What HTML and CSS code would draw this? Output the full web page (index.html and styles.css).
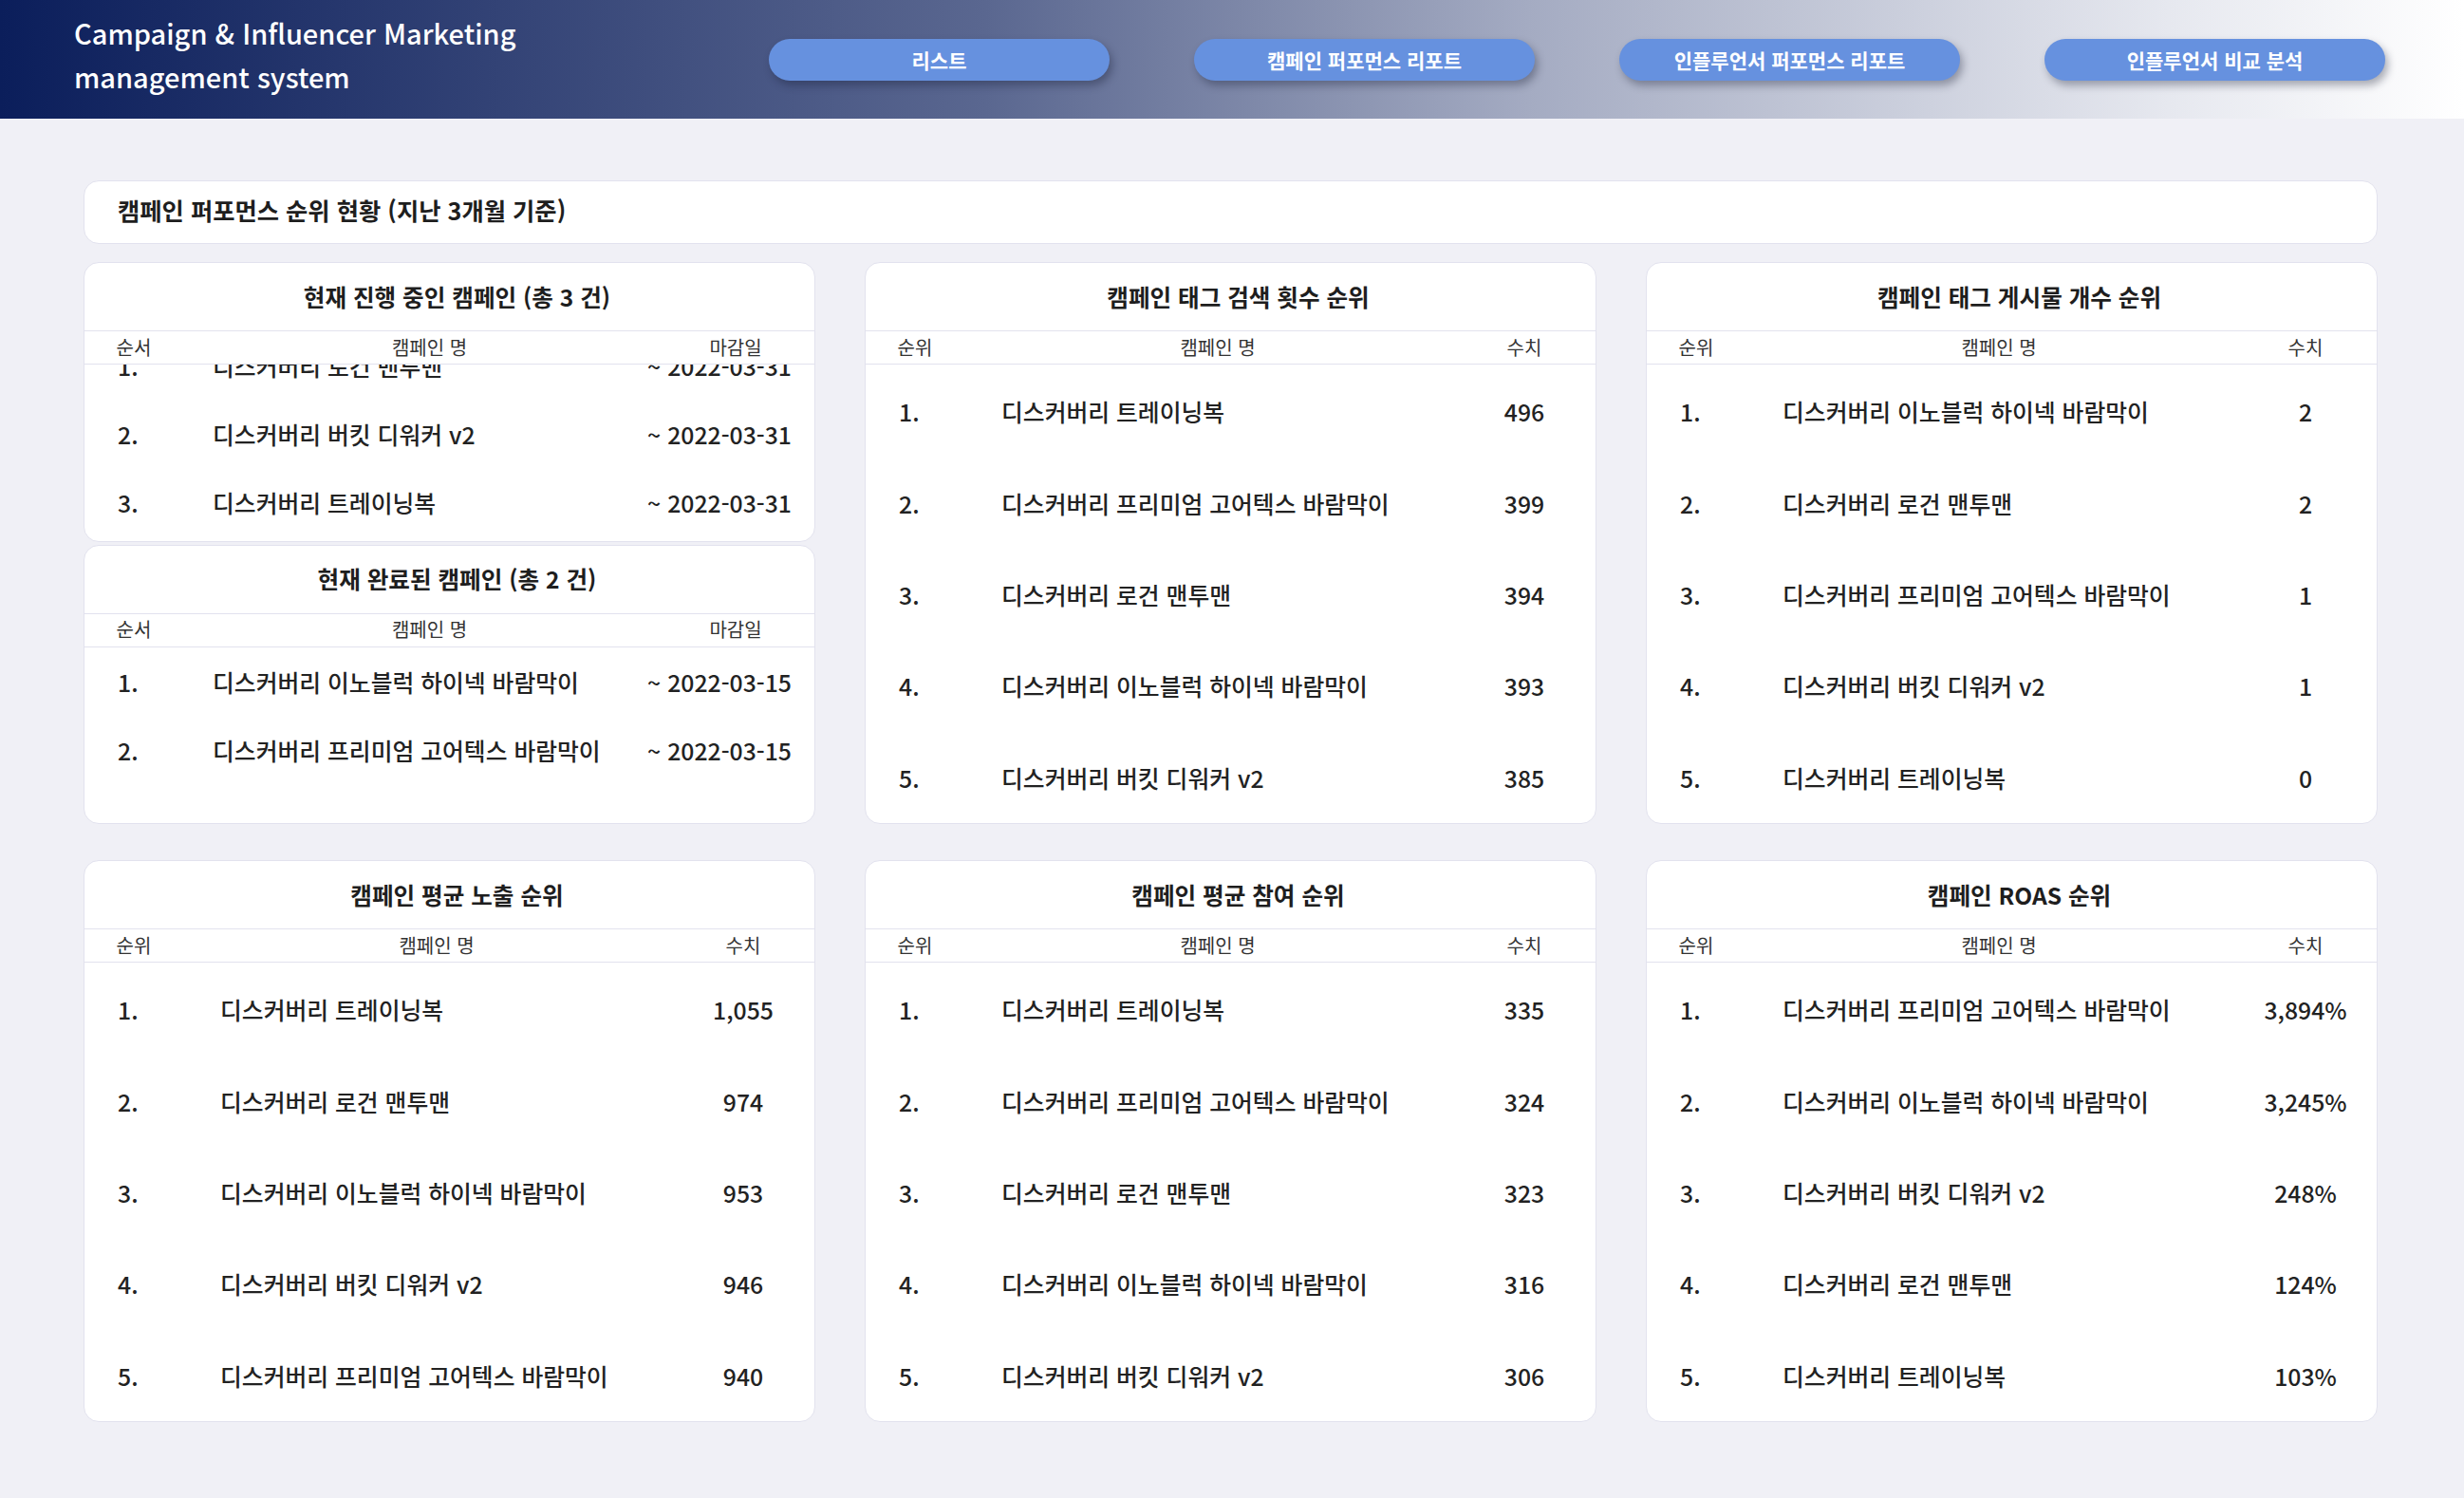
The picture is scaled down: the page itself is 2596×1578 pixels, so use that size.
FILE: index.html
```html
<!DOCTYPE html>
<html lang="ko">
<head>
<meta charset="utf-8">
<title>Campaign &amp; Influencer Marketing management system</title>
<link rel="stylesheet" href="styles.css">
</head>
<body>
<header class="topbar">
  <div class="brand">Campaign &amp; Influencer Marketing<br>management system</div>
  <nav class="nav">
    <a class="nav-btn">리스트</a>
    <a class="nav-btn">캠페인 퍼포먼스 리포트</a>
    <a class="nav-btn">인플루언서 퍼포먼스 리포트</a>
    <a class="nav-btn">인플루언서 비교 분석</a>
  </nav>
</header>
<main class="page">
  <div class="banner">캠페인 퍼포먼스 순위 현황 (지난 3개월 기준)</div>
  <div class="grid">
    <div class="stack">
      <section class="card">
        <h2 class="card-title">현재 진행 중인 캠페인 (총 3 건)</h2>
        <div class="thead date-cols"><span>순서</span><span>캠페인 명</span><span>마감일</span></div>
        <div class="tbody scrolled">
          <div class="row date-cols short"><span class="rank">1.</span><span class="name">디스커버리 로건 맨투맨</span><span class="date">~ 2022-03-31</span></div>
          <div class="row date-cols short"><span class="rank">2.</span><span class="name">디스커버리 버킷 디워커 v2</span><span class="date">~ 2022-03-31</span></div>
          <div class="row date-cols short"><span class="rank">3.</span><span class="name">디스커버리 트레이닝복</span><span class="date">~ 2022-03-31</span></div>
        </div>
      </section>
      <section class="card">
        <h2 class="card-title">현재 완료된 캠페인 (총 2 건)</h2>
        <div class="thead date-cols"><span>순서</span><span>캠페인 명</span><span>마감일</span></div>
        <div class="tbody">
          <div class="row date-cols short"><span class="rank">1.</span><span class="name">디스커버리 이노블럭 하이넥 바람막이</span><span class="date">~ 2022-03-15</span></div>
          <div class="row date-cols short"><span class="rank">2.</span><span class="name">디스커버리 프리미엄 고어텍스 바람막이</span><span class="date">~ 2022-03-15</span></div>
        </div>
      </section>
    </div>

    <section class="card">
      <h2 class="card-title">캠페인 태그 검색 횟수 순위</h2>
      <div class="thead val-cols"><span>순위</span><span>캠페인 명</span><span>수치</span></div>
      <div class="tbody fill">
        <div class="row val-cols"><span class="rank">1.</span><span class="name">디스커버리 트레이닝복</span><span class="val">496</span></div>
        <div class="row val-cols"><span class="rank">2.</span><span class="name">디스커버리 프리미엄 고어텍스 바람막이</span><span class="val">399</span></div>
        <div class="row val-cols"><span class="rank">3.</span><span class="name">디스커버리 로건 맨투맨</span><span class="val">394</span></div>
        <div class="row val-cols"><span class="rank">4.</span><span class="name">디스커버리 이노블럭 하이넥 바람막이</span><span class="val">393</span></div>
        <div class="row val-cols"><span class="rank">5.</span><span class="name">디스커버리 버킷 디워커 v2</span><span class="val">385</span></div>
      </div>
    </section>

    <section class="card">
      <h2 class="card-title">캠페인 태그 게시물 개수 순위</h2>
      <div class="thead val-cols"><span>순위</span><span>캠페인 명</span><span>수치</span></div>
      <div class="tbody fill">
        <div class="row val-cols"><span class="rank">1.</span><span class="name">디스커버리 이노블럭 하이넥 바람막이</span><span class="val">2</span></div>
        <div class="row val-cols"><span class="rank">2.</span><span class="name">디스커버리 로건 맨투맨</span><span class="val">2</span></div>
        <div class="row val-cols"><span class="rank">3.</span><span class="name">디스커버리 프리미엄 고어텍스 바람막이</span><span class="val">1</span></div>
        <div class="row val-cols"><span class="rank">4.</span><span class="name">디스커버리 버킷 디워커 v2</span><span class="val">1</span></div>
        <div class="row val-cols"><span class="rank">5.</span><span class="name">디스커버리 트레이닝복</span><span class="val">0</span></div>
      </div>
    </section>

    <section class="card">
      <h2 class="card-title">캠페인 평균 노출 순위</h2>
      <div class="thead val-cols"><span>순위</span><span>캠페인 명</span><span>수치</span></div>
      <div class="tbody fill">
        <div class="row val-cols"><span class="rank">1.</span><span class="name">디스커버리 트레이닝복</span><span class="val">1,055</span></div>
        <div class="row val-cols"><span class="rank">2.</span><span class="name">디스커버리 로건 맨투맨</span><span class="val">974</span></div>
        <div class="row val-cols"><span class="rank">3.</span><span class="name">디스커버리 이노블럭 하이넥 바람막이</span><span class="val">953</span></div>
        <div class="row val-cols"><span class="rank">4.</span><span class="name">디스커버리 버킷 디워커 v2</span><span class="val">946</span></div>
        <div class="row val-cols"><span class="rank">5.</span><span class="name">디스커버리 프리미엄 고어텍스 바람막이</span><span class="val">940</span></div>
      </div>
    </section>

    <section class="card">
      <h2 class="card-title">캠페인 평균 참여 순위</h2>
      <div class="thead val-cols"><span>순위</span><span>캠페인 명</span><span>수치</span></div>
      <div class="tbody fill">
        <div class="row val-cols"><span class="rank">1.</span><span class="name">디스커버리 트레이닝복</span><span class="val">335</span></div>
        <div class="row val-cols"><span class="rank">2.</span><span class="name">디스커버리 프리미엄 고어텍스 바람막이</span><span class="val">324</span></div>
        <div class="row val-cols"><span class="rank">3.</span><span class="name">디스커버리 로건 맨투맨</span><span class="val">323</span></div>
        <div class="row val-cols"><span class="rank">4.</span><span class="name">디스커버리 이노블럭 하이넥 바람막이</span><span class="val">316</span></div>
        <div class="row val-cols"><span class="rank">5.</span><span class="name">디스커버리 버킷 디워커 v2</span><span class="val">306</span></div>
      </div>
    </section>

    <section class="card">
      <h2 class="card-title">캠페인 ROAS 순위</h2>
      <div class="thead val-cols"><span>순위</span><span>캠페인 명</span><span>수치</span></div>
      <div class="tbody fill">
        <div class="row val-cols"><span class="rank">1.</span><span class="name">디스커버리 프리미엄 고어텍스 바람막이</span><span class="val">3,894%</span></div>
        <div class="row val-cols"><span class="rank">2.</span><span class="name">디스커버리 이노블럭 하이넥 바람막이</span><span class="val">3,245%</span></div>
        <div class="row val-cols"><span class="rank">3.</span><span class="name">디스커버리 버킷 디워커 v2</span><span class="val">248%</span></div>
        <div class="row val-cols"><span class="rank">4.</span><span class="name">디스커버리 로건 맨투맨</span><span class="val">124%</span></div>
        <div class="row val-cols"><span class="rank">5.</span><span class="name">디스커버리 트레이닝복</span><span class="val">103%</span></div>
      </div>
    </section>
  </div>
</main>
</body>
</html>
```
FILE: styles.css
```css
* { box-sizing: border-box; }

html, body {
  margin: 0;
  padding: 0;
}

body {
  background: #f0f0f6;
  font-family: "Noto Sans CJK KR", "Noto Sans", sans-serif;
  color: #222;
  min-height: 1578px;
}

.topbar {
  height: 125px;
  display: flex;
  align-items: center;
  padding: 0 83px 0 78px;
  background: linear-gradient(90deg, #0b1e5b 0%, #5a6790 40%, #a4abc2 62%, #e6e8ef 88%, #ffffff 100%);
}

.brand {
  color: #fff;
  font-size: 29px;
  font-weight: 500;
  line-height: 46px;
  margin-bottom: 12px;
}

.nav {
  margin-left: auto;
  display: flex;
  gap: 89px;
}

.nav-btn {
  width: 359px;
  height: 44px;
  border-radius: 22px;
  background: #6691df;
  color: #fff;
  font-size: 21px;
  font-weight: 700;
  display: flex;
  align-items: center;
  justify-content: center;
  box-shadow: 3px 5px 9px rgba(20, 25, 50, 0.35);
  cursor: pointer;
}

.page {
  padding: 65px 91px 0 88px;
}

.banner {
  height: 67px;
  background: #fff;
  border: 1px solid #e2e2ee;
  border-radius: 16px;
  display: flex;
  align-items: center;
  padding-left: 35px;
  padding-bottom: 5px;
  font-size: 25.3px;
  font-weight: 700;
  color: #1e1e1e;
}

.grid {
  margin-top: 19px;
  display: grid;
  grid-template-columns: repeat(3, 1fr);
  grid-template-rows: 592px 592px;
  column-gap: 52px;
  row-gap: 38px;
}

.stack {
  display: flex;
  flex-direction: column;
  gap: 3px;
  min-height: 0;
}

.stack .card {
  flex: 1 1 0;
}

.card {
  background: #fff;
  border: 1px solid #e2e2ee;
  border-radius: 16px;
  display: flex;
  flex-direction: column;
  overflow: hidden;
  min-height: 0;
}

.card-title {
  margin: 0;
  height: 72px;
  flex: 0 0 72px;
  display: flex;
  align-items: center;
  justify-content: center;
  padding: 0 0 2px 16px;
  font-size: 24.6px;
  font-weight: 700;
  color: #1e1e1e;
  border-bottom: 1px solid #e2e2ee;
}

.thead {
  height: 35px;
  flex: 0 0 35px;
  border-bottom: 1px solid #e2e2ee;
  font-size: 20px;
  font-weight: 400;
  color: #333;
  align-items: center;
  padding-bottom: 2px;
}

.thead span {
  text-align: center;
}

.date-cols {
  display: grid;
  grid-template-columns: 104px 1fr 126px;
  padding-right: 20px;
}

.val-cols {
  display: grid;
  grid-template-columns: 104px 1fr 112px;
  padding-right: 19px;
}

.tbody {
  flex: 1 1 auto;
  min-height: 0;
  display: flex;
  flex-direction: column;
  overflow: hidden;
}

.tbody.scrolled {
  justify-content: flex-end;
  padding-bottom: 5px;
}

.tbody.fill {
  padding-top: 1px;
}

.row {
  align-items: center;
  font-size: 24.8px;
  font-weight: 500;
  color: #222;
  white-space: nowrap;
}

.row.short {
  height: 72px;
  flex: 0 0 72px;
}

.tbody.fill .row {
  flex: 1 1 0;
}

.rank {
  padding-left: 35px;
}

.val-cols .name {
  padding-left: 39px;
}

.date-cols .name {
  padding-left: 31px;
}

.val {
  text-align: center;
}

.date {
  justify-self: end;
  padding-right: 4px;
}
```
